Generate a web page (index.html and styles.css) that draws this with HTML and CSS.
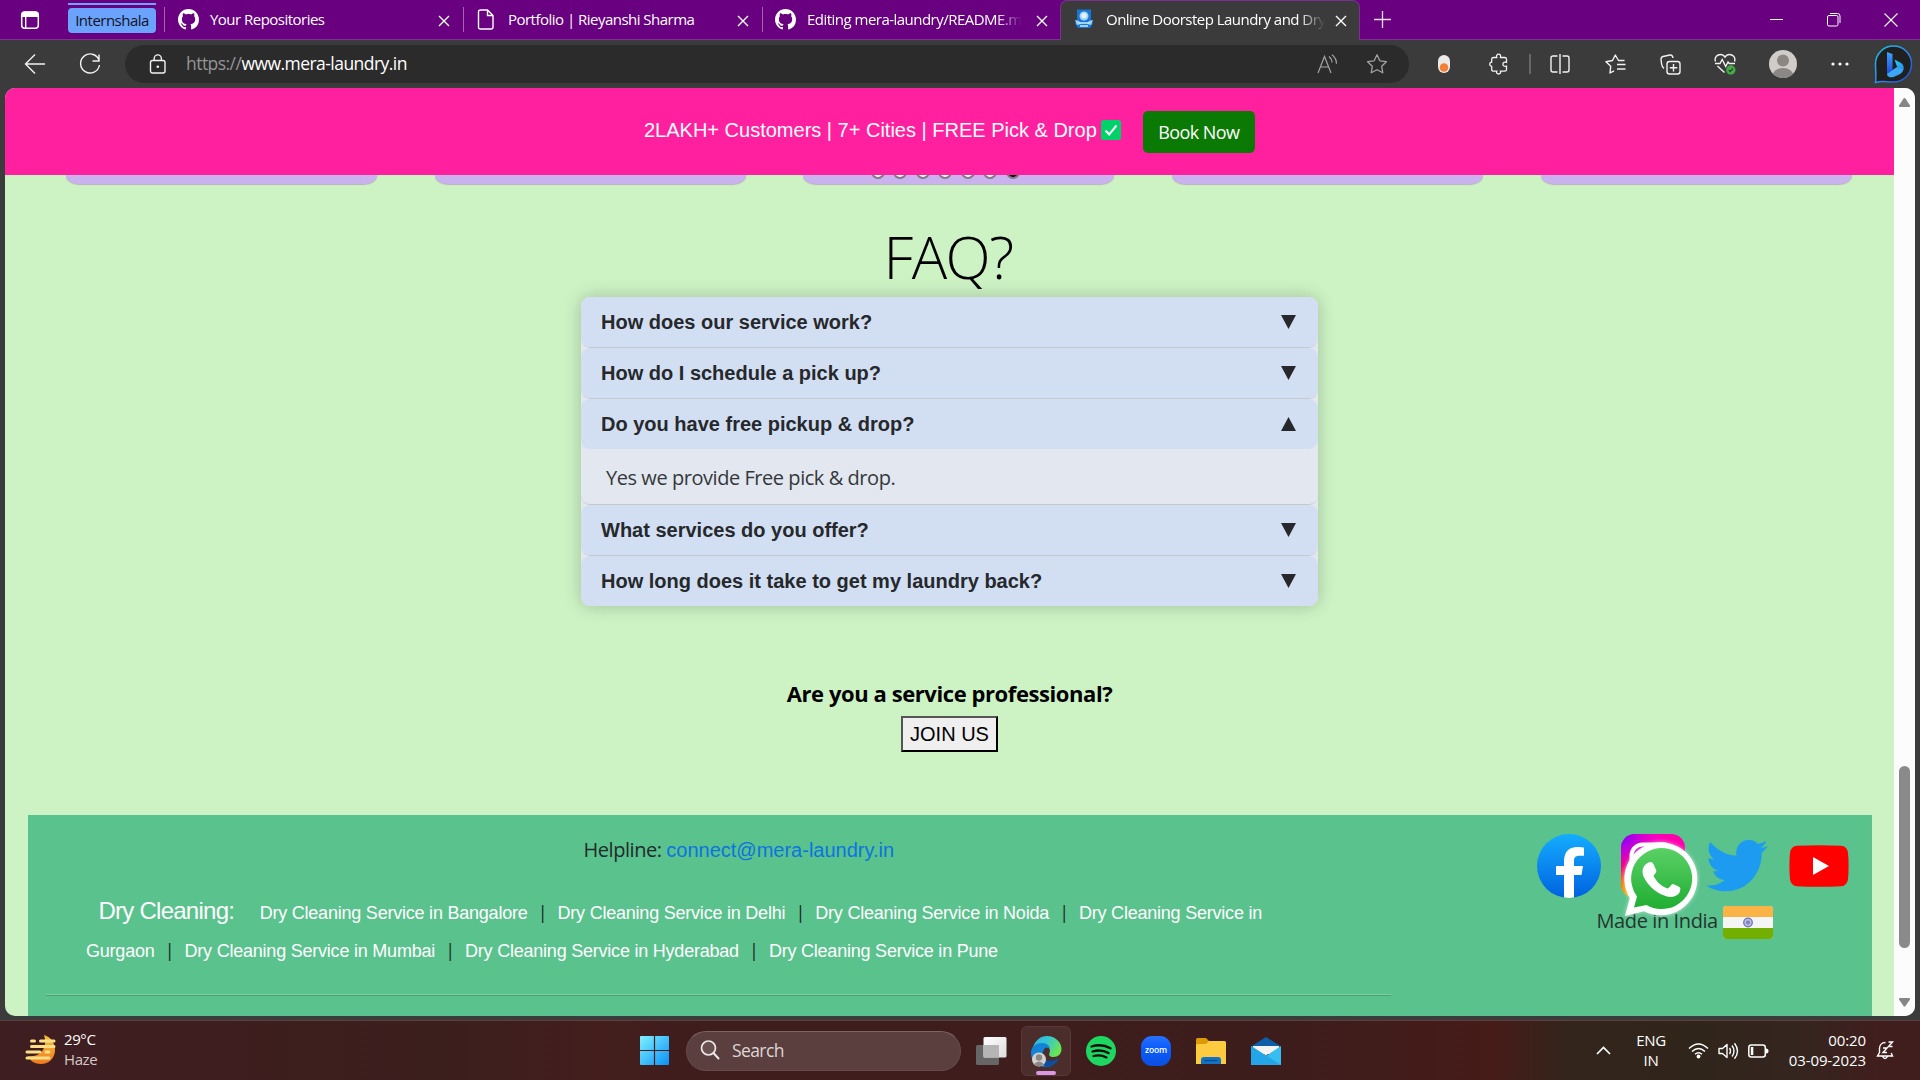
FILE: index.html
```html
<!DOCTYPE html>
<html lang="en">
<head>
<meta charset="utf-8">
<title>Online Doorstep Laundry and Dry Cleaning</title>
<link rel="stylesheet" href="styles.css">
</head>
<body>
<svg class="defs" width="0" height="0" aria-hidden="true">
  <defs>
    <symbol id="github" viewBox="0 0 16 16"><path fill="#fff" d="M8 0C3.58 0 0 3.58 0 8c0 3.54 2.29 6.53 5.47 7.59.4.07.55-.17.55-.38 0-.19-.01-.82-.01-1.49-2.01.37-2.53-.49-2.69-.94-.09-.23-.48-.94-.82-1.13-.28-.15-.68-.52-.01-.53.63-.01 1.08.58 1.23.82.72 1.21 1.87.87 2.33.66.07-.52.28-.87.51-1.07-1.78-.2-3.64-.89-3.64-3.95 0-.87.31-1.59.82-2.15-.08-.2-.36-1.02.08-2.12 0 0 .67-.21 2.2.82.64-.18 1.32-.27 2-.27s1.36.09 2 .27c1.53-1.04 2.2-.82 2.2-.82.44 1.1.16 1.92.08 2.12.51.56.82 1.27.82 2.15 0 3.07-1.87 3.75-3.65 3.95.29.25.54.73.54 1.48 0 1.07-.01 1.93-.01 2.2 0 .21.15.46.55.38A8.01 8.01 0 0 0 16 8c0-4.42-3.58-8-8-8z"/></symbol>
    <symbol id="close" viewBox="0 0 12 12"><path d="M1 1l10 10M11 1L1 11" stroke="#fff" stroke-width="1.4" fill="none"/></symbol>
    <symbol id="down" viewBox="0 0 15 14"><path d="M0 0h15L7.5 14z" fill="#26282b"/></symbol>
    <symbol id="up" viewBox="0 0 15 14"><path d="M0 14h15L7.5 0z" fill="#26282b"/></symbol>
  </defs>
</svg>

<header class="tabbar">
  <span class="workspace"><svg width="20" height="20" viewBox="0 0 20 20"><rect x="1.7" y="2" width="16.6" height="16.3" rx="3" fill="none" stroke="#fff" stroke-width="1.5"/><path d="M1.5 7V4.500q0-3 3-3h11q3 0 3 3V7z" fill="#fff"/><path d="M5.700 6v12" stroke="#fff" stroke-width="1.400"/></svg></span>
  <span class="group"><b>Internshala</b></span>
  <div class="tab tab-repos"><svg class="fav" width="21" height="21"><use href="#github"/></svg><span class="title">Your Repositories</span><svg class="x" width="12" height="12"><use href="#close"/></svg></div>
  <div class="tab tab-portfolio"><svg class="fav" width="18" height="21" viewBox="0 0 18 21"><path d="M3.500 1h7L16 6.500V18q0 2-2 2H3.500q-2 0-2-2V3q0-2 2-2zM10.500 1v5.500H16" fill="none" stroke="#fff" stroke-width="1.400"/></svg><span class="title">Portfolio | Rieyanshi Sharma</span><svg class="x" width="12" height="12"><use href="#close"/></svg></div>
  <div class="tab tab-edit"><svg class="fav" width="21" height="21"><use href="#github"/></svg><span class="title fade">Editing mera-laundry/README.m</span><svg class="x" width="12" height="12"><use href="#close"/></svg></div>
  <div class="tab tab-active"><svg class="fav" width="20" height="20" viewBox="0 0 20 20"><path d="M3 .5h14v11l2 3-3 4.500H4L1 14.500l2-3z" fill="#1677d8"/><circle cx="10" cy="7" r="4.500" fill="#a7d4fa"/><circle cx="10" cy="6.500" r="2.600" fill="#e6f4ff"/><path d="M1 11l4 1 2 3-4 1zM19 11l-4 1-2 3 4 1z" fill="#9ed2ff"/><path d="M5 14h10M6 17h8" stroke="#d4ebff" stroke-width="1.300"/></svg><span class="title fade">Online Doorstep Laundry and Dry</span><svg class="x" width="12" height="12"><use href="#close"/></svg></div>
  <svg class="newtab" width="19" height="19" viewBox="0 0 19 19"><path d="M9.500 1v17M1 9.500h17" stroke="#eadcf0" stroke-width="1.300"/></svg>
  <div class="winctl">
    <svg width="14" height="14" viewBox="0 0 14 14"><path d="M0 6.500h13" stroke="#fff"/></svg>
    <svg width="14" height="14" viewBox="0 0 14 14"><rect x=".5" y="2.500" width="10.500" height="10.500" rx="1.500" fill="none" stroke="#fff"/><path d="M3 .5h7.500q2.500 0 2.500 2.500V10" fill="none" stroke="#fff"/></svg>
    <svg width="14" height="14" viewBox="0 0 14 14"><path d="M.5 .5l13 13M13.500 .5l-13 13" stroke="#fff" stroke-width="1.100"/></svg>
  </div>
</header>

<nav class="toolbar">
  <svg class="back" width="22" height="22" viewBox="0 0 22 22"><path d="M21 11H1.500M11 1.500L1.500 11l9.500 9.500" fill="none" stroke="#f2f2f2" stroke-width="1.400"/></svg>
  <svg class="reload" width="22" height="22" viewBox="0 0 22 22"><path d="M20.300 8A9.500 9.500 0 1 0 20.500 12M20 1.500V8h-6.500" fill="none" stroke="#f2f2f2" stroke-width="1.400"/></svg>
  <div class="address">
    <svg class="lock" width="18" height="20" viewBox="0 0 18 20"><rect x="1.500" y="6.500" width="14.500" height="12.500" rx="2" fill="none" stroke="#f2f2f2" stroke-width="1.400"/><path d="M5.200 6.500V4.500a3.600 3.600 0 0 1 7.200 0v2" fill="none" stroke="#f2f2f2" stroke-width="1.400"/><circle cx="8.800" cy="12.700" r="1.300" fill="#f2f2f2"/></svg>
    <span class="url"><i>https://</i>www.mera-laundry.in</span>
    <svg class="read" width="21" height="20" viewBox="0 0 21 20"><path d="M1 19L7.500 2.500 14 19M3.300 13h8.400M12 2.500q3 2.500 3 6M15 .8q4.500 3.700 4.500 9" fill="none" stroke="#a3a3a3" stroke-width="1.200"/></svg>
    <svg class="star" width="22" height="22" viewBox="0 0 22 22"><path d="M11 1.800l2.900 6 6.500.9-4.700 4.600 1.100 6.500L11 16.700l-5.800 3.100 1.100-6.500L1.600 8.700l6.500-.9z" fill="none" stroke="#a3a3a3" stroke-width="1.300" stroke-linejoin="round"/></svg>
  </div>
  <span class="tool t1"><svg width="12" height="18" viewBox="0 0 12 18"><rect width="12" height="18" rx="6" fill="#eaeaea"/><circle cx="6" cy="12.500" r="4.300" fill="#f58033"/></svg></span>
  <span class="tool t2"><svg width="20" height="22" viewBox="0 0 20 22"><path d="M4.500 4.500h3.200c-.6-1.800.3-3.300 1.900-3.300s2.500 1.500 1.900 3.300h4.200q1.800 0 1.800 1.800v3c-2-.6-3.600.2-3.600 1.900s1.600 2.500 3.600 1.900v3.300q0 1.800-1.800 1.800h-4.200c.6 1.700-.3 2.800-1.900 2.800s-2.500-1.100-1.900-2.800H4.500q-1.800 0-1.800-1.800v-3c-1.200-.3-2-1-2-2.200s.8-2 2-2.200V6.300q0-1.800 1.800-1.800z" fill="none" stroke="#f2f2f2" stroke-width="1.300"/></svg></span>
  <span class="divider"></span>
  <span class="tool t3"><svg width="20" height="20" viewBox="0 0 20 20"><path d="M7.500 2H3Q1 2 1 4v12q0 2 2 2h4.500M12.500 2H17q2 0 2 2v12q0 2-2 2h-4.500M10 0v20" fill="none" stroke="#f2f2f2" stroke-width="1.400"/></svg></span>
  <span class="tool t4"><svg width="21" height="20" viewBox="0 0 21 20"><path d="M19.500 6.500h-6L10.300 1 7.500 6.500 1 7.800l4.700 4.500L5 19l4-2.200M12 10.500h8.500M12 15h8.500" fill="none" stroke="#f2f2f2" stroke-width="1.400" stroke-linejoin="round"/></svg></span>
  <span class="tool t5"><svg width="21" height="21" viewBox="0 0 21 21"><rect x="7" y="7.500" width="13" height="12.500" rx="2.500" fill="none" stroke="#f2f2f2" stroke-width="1.400"/><path d="M13.500 10v7.500M9.800 13.800h7.500M4 14.500Q2 13 1.600 10L1 5.500Q.8 3 3 2.500L10 1q2.500-.3 3 3" fill="none" stroke="#f2f2f2" stroke-width="1.400"/></svg></span>
  <span class="tool t6"><svg width="22" height="22" viewBox="0 0 22 22"><path d="M1.500 8.500C0 4 3.500 1.500 6.500 1.500c2 0 3.500 1 4.500 2.700 1-1.700 2.500-2.700 4.500-2.700 3 0 6.500 2.500 5 7M1 10.500h5L8.200 6.500l3.500 7 2.300-4.500 1.200 1.500H21M3.500 13l7 6.500" fill="none" stroke="#f2f2f2" stroke-width="1.400"/><circle cx="16.800" cy="17" r="4.700" fill="#45a948"/><path d="M14.800 17.200l1.400 1.300 2.600-2.800" fill="none" stroke="#2b2b2b" stroke-width="1.100"/></svg></span>
  <span class="tool t7"><svg width="28" height="28" viewBox="0 0 28 28"><clipPath id="av"><circle cx="14" cy="14" r="14"/></clipPath><g clip-path="url(#av)"><rect width="28" height="28" fill="#cfccc9"/><circle cx="14" cy="10.500" r="6" fill="#8b8784"/><ellipse cx="14" cy="26" rx="10.500" ry="8" fill="#8b8784"/></g></svg></span>
  <span class="tool t8"><svg width="18" height="4" viewBox="0 0 18 4"><circle cx="2" cy="2" r="1.600" fill="#fff"/><circle cx="9" cy="2" r="1.600" fill="#fff"/><circle cx="16" cy="2" r="1.600" fill="#fff"/></svg></span>
  <span class="tool t9"><svg width="39" height="39" viewBox="0 0 39 39"><defs><linearGradient id="bg1" x1="0" y1="0" x2="1" y2="1"><stop offset="0" stop-color="#19c9ee"/><stop offset=".55" stop-color="#2f83ee"/><stop offset="1" stop-color="#1548c8"/></linearGradient><linearGradient id="bg2" x1="0" y1="0" x2="0" y2="1"><stop offset="0" stop-color="#3ea4f7"/><stop offset="1" stop-color="#1d46e2"/></linearGradient><linearGradient id="bg3" x1="0" y1="0" x2="1" y2="1"><stop offset="0" stop-color="#1fd0f5"/><stop offset="1" stop-color="#2c8ef0"/></linearGradient></defs><path d="M1.500 37.500C2.500 31 1.500 25 1.500 19A18 18 0 1 1 19.500 37C12 37 8 35.500 1.500 37.500z" fill="#202020" stroke="url(#bg1)" stroke-width="1.500"/><path d="M13 7l5.500 2v16L13 30z" fill="url(#bg2)"/><path d="M13 29l5.500-4 5-3.200L29.600 24c-.6 3-3 4.800-5 5.800l-5 2.200c-3.500 1-6.200-.2-6.600-3z" fill="#3ba6f5"/><path d="M20.500 14.500L27 18q3.500 2.500 2.500 6.500L23 21.500z" fill="url(#bg3)"/></svg></span>
</nav>

<div class="frame">
  <div class="site">
    <div class="banner">
      <span class="promo">2LAKH+ Customers | 7+ Cities | FREE Pick &amp; Drop</span>
      <svg class="tick" width="20" height="20" viewBox="0 0 20 20"><rect width="20" height="20" rx="2.500" fill="#00d26a"/><path d="M4.500 10.500l3.700 4 7.300-9" fill="none" stroke="#fff" stroke-width="2"/></svg>
      <a class="book">Book Now</a>
    </div>
    <div class="cards">
      <div class="card"></div><div class="card"></div>
      <div class="card"><div class="dots"><i></i><i></i><i></i><i></i><i></i><i></i><i class="on"></i></div></div>
      <div class="card"></div><div class="card"></div>
    </div>
    <h1>FAQ?</h1>
    <div class="faq">
      <div class="item"><div class="q">How does our service work?<svg width="15" height="14"><use href="#down"/></svg></div></div>
      <div class="item"><div class="q">How do I schedule a pick up?<svg width="15" height="14"><use href="#down"/></svg></div></div>
      <div class="item"><div class="q">Do you have free pickup &amp; drop?<svg width="15" height="14"><use href="#up"/></svg></div><div class="a">Yes we provide Free pick &amp; drop.</div></div>
      <div class="item"><div class="q">What services do you offer?<svg width="15" height="14"><use href="#down"/></svg></div></div>
      <div class="item last"><div class="q">How long does it take to get my laundry back?<svg width="15" height="14"><use href="#down"/></svg></div></div>
    </div>
    <div class="pro"><b>Are you a service professional?</b><button>JOIN US</button></div>
    <footer>
      <div class="info">
        <p class="help">Helpline: <a>connect@mera-laundry.in</a></p>
        <p class="links"><span class="lead">Dry Cleaning:</span><a>Dry Cleaning Service in Bangalore</a><s>|</s><a>Dry Cleaning Service in Delhi</a><s>|</s><a>Dry Cleaning Service in Noida</a><s>|</s><a>Dry Cleaning Service in<br>Gurgaon</a><s>|</s><a>Dry Cleaning Service in Mumbai</a><s>|</s><a>Dry Cleaning Service in Hyderabad</a><s>|</s><a>Dry Cleaning Service in Pune</a></p>
        <hr>
      </div>
      <div class="social">
        <div class="logos">
          <svg width="64" height="64" viewBox="0 0 64 64"><defs><linearGradient id="fb" x1="0" y1="0" x2="0" y2="1"><stop offset="0" stop-color="#14adfe"/><stop offset="1" stop-color="#0062e0"/></linearGradient></defs><circle cx="32" cy="32" r="32" fill="url(#fb)"/><path d="M27 63.600V41h-8v-9h8v-4c0-10 4.500-15 13.500-15 3 0 5.500.3 6.500.6v8.200h-4.500c-4.500 0-5.500 2.200-5.500 5.500V32h9l-1.500 9H37v22.600q-5 .7-10 0z" fill="#fff"/></svg>
          <svg width="64" height="64" viewBox="0 0 64 64"><defs><radialGradient id="ig" cx=".1" cy="1.050" r="1.250"><stop offset="0" stop-color="#ffc800"/><stop offset=".22" stop-color="#ff7a00"/><stop offset=".45" stop-color="#ff0069"/><stop offset=".7" stop-color="#fa00c8"/><stop offset="1" stop-color="#f0a"/></radialGradient><radialGradient id="ig2" cx="0" cy="0" r=".7"><stop offset="0" stop-color="#6a00ff"/><stop offset="1" stop-color="#f0c" stop-opacity="0"/></radialGradient></defs><rect width="64" height="64" rx="14" fill="url(#ig)"/><rect width="64" height="64" rx="14" fill="url(#ig2)"/><rect x="10.500" y="10.500" width="43" height="43" rx="11" fill="none" stroke="#fff" stroke-width="4"/><circle cx="32" cy="32" r="15" fill="none" stroke="#fff" stroke-width="4"/></svg>
          <svg class="tw" width="62" height="53" viewBox="0 0 24 20" preserveAspectRatio="none"><path fill="#1d9bf0" d="M23.950 2.600c-.88.390-1.830.650-2.820.770 1.010-.6 1.790-1.560 2.160-2.700-.95.550-2 .96-3.120 1.180A4.920 4.920 0 0 0 11.800 6.300C7.700 6.100 4.100 4.100 1.670 1.150c-.43.720-.67 1.560-.67 2.450 0 1.700.88 3.210 2.200 4.090-.8-.03-1.570-.25-2.230-.61v.06c0 2.380 1.700 4.370 3.950 4.820-.74.2-1.500.230-2.220.080.630 1.950 2.440 3.370 4.600 3.410A9.870 9.870 0 0 1 0 17.500 13.950 13.950 0 0 0 7.550 19.700c9.050 0 14-7.500 14-13.980 0-.21 0-.42-.02-.63.960-.69 1.800-1.560 2.420-2.490z"/></svg>
          <svg class="yt" width="60" height="42" viewBox="0 0 60 42"><path d="M8 .8Q30-.5 52 .8q6 .4 7 7 1.200 13 0 26.400-1 6.600-7 7-22 1.300-44 0-6-.4-7-7-1.200-13.400 0-26.400Q2 1.200 8 .8z" fill="#f00"/><path d="M24 12l16 9-16 9z" fill="#fff"/></svg>
        </div>
        <div class="made">Made in India <svg width="50" height="33" viewBox="0 0 50 33"><clipPath id="fl"><rect width="50" height="33" rx="3.500"/></clipPath><g clip-path="url(#fl)"><rect width="50" height="33" fill="#f5f5f5"/><rect width="50" height="11" fill="#fab446"/><rect y="22" width="50" height="11" fill="#73af00"/></g><circle cx="25" cy="16.500" r="4.300" fill="#b8bbdc" stroke="#6a70b4" stroke-width="1.200"/><circle cx="25" cy="16.500" r="2" fill="#7c82c0"/></svg></div>
        <svg class="whatsapp" width="80" height="80" viewBox="0 0 80 80"><defs><linearGradient id="wa" x1="0" y1="0" x2="0" y2="1"><stop offset="0" stop-color="#5bd066"/><stop offset="1" stop-color="#1fae32"/></linearGradient></defs><path d="M4 77l4.800-18A36.500 36.500 0 1 1 23 72.200z" fill="#fff"/><path d="M13 68.500l3-11A30.500 30.500 0 1 1 25.500 66z" fill="url(#wa)"/><path d="M27.500 23.500c2-.4 4-.5 5 1.500l2.800 6.500c.5 1.500-2.300 4.500-2.800 5.500 3.500 6.500 8 10 14 12.500 1.500 0 3.500-4 5-4.500 2 .2 6 2.500 7.500 3.500.8.700.3 4.500-1.500 6.500-4 3.500-8.500 3.500-13 2-11-3.500-18.500-12-22-19.500-2-6-1-11 5-14z" fill="#fff"/></svg>
      </div>
    </footer>
  </div>
  <div class="scroll">
    <svg width="13" height="11" viewBox="0 0 13 11"><path d="M2 10Q.500 10 1 8.500L5.500 1.500q1-1 2 0L12 8.500q.500 1.500-1 1.500z" fill="#868686"/></svg>
    <span class="thumb"></span>
    <svg width="13" height="11" viewBox="0 0 13 11"><path d="M2 1Q.500 1 1 2.500L5.500 9q1 1 2 0L12 2.500q.500-1.500-1-1.500z" fill="#868686"/></svg>
  </div>
</div>

<div class="taskbar">
  <div class="weather"><svg width="31" height="34" viewBox="0 0 31 34"><defs><linearGradient id="mo" x1="0" y1="0" x2="0" y2="1"><stop offset="0" stop-color="#f7c33f"/><stop offset="1" stop-color="#ee7a1e"/></linearGradient></defs><path d="M19 1c7 2 11 8 11 15 0 8-6 14-14 14-6 0-11-3-13-8 13 2 20-9 16-21z" fill="url(#mo)"/><path d="M6.500 7h3M15.500 7H29M6.500 12.500H29M2 18h13M21 18h3M2 24h22" stroke="#ffdf85" stroke-width="3" stroke-linecap="round"/></svg><span>29°C<br><em>Haze</em></span></div>
  <div class="apps">
    <svg class="start" width="29" height="29" viewBox="0 0 29 29"><defs><linearGradient id="wn" x1="0" y1="0" x2="1" y2="1"><stop offset="0" stop-color="#80f1ff"/><stop offset="1" stop-color="#0a90f5"/></linearGradient></defs><path d="M1 0h12.900v13.900H0V1q0-1 1-1zM15.100 0H28q1 0 1 1v12.900H15.100zM0 15.100h13.900V29H1q-1 0-1-1zM15.100 15.100H29V28q0 1-1 1H15.100z" fill="url(#wn)"/></svg>
    <div class="search"><svg width="20" height="20" viewBox="0 0 20 20"><circle cx="8.500" cy="8" r="7" fill="#ffffff18" stroke="#f0e8e8" stroke-width="1.700"/><path d="M13.500 13l5 5.500" stroke="#f0e8e8" stroke-width="2" stroke-linecap="round"/></svg>Search</div>
    <svg class="view" width="31" height="28" viewBox="0 0 31 28"><defs><linearGradient id="tv" x1="0" y1="0" x2="1" y2="1"><stop offset="0" stop-color="#fff"/><stop offset="1" stop-color="#dcdcdc"/></linearGradient></defs><rect y="8" width="23" height="20" rx="1.500" fill="#666"/><rect x="7.500" width="23" height="20.500" rx="1.500" fill="url(#tv)"/><path d="M7.500 8H23v12.500H7.500z" fill="#b5b5b5"/></svg>
    <span class="edge"><svg width="31" height="31" viewBox="0 0 31 31"><defs><linearGradient id="e1" x1="0" y1="0" x2="1" y2=".5"><stop offset="0" stop-color="#2fb1f2"/><stop offset=".5" stop-color="#35c6cf"/><stop offset="1" stop-color="#6be454"/></linearGradient></defs><path d="M1 15C3 4 10 0 16 0c8 0 14.500 6 14.500 13 0 5-3.500 8-8 8-4 0-5-2-4-4 1.500-4-1-6-4-6-5 0-10 1-13.500 4z" fill="url(#e1)"/><path d="M0 17C0 10 6 7 11 7c5 0 8 3 8 6-3-3-7-1-7 4 0 8 7 12 14 8-3 4-7 6-11 6C7 31 0 26 0 17z" fill="#1284d8"/><path d="M12 16c-1 8 6 12 16 6-2 6-8 9-13 9-5-3-7-10-3-15z" fill="#0d4f9e"/><circle cx="8" cy="23.500" r="7" fill="#d3d1cf"/><circle cx="8" cy="21.500" r="3.200" fill="#8b8784"/><path d="M3 28.300q5-5.500 10 0-5 4-10 0z" fill="#8b8784"/></svg></span>
    <svg class="spotify" width="30" height="30" viewBox="0 0 30 30"><circle cx="15" cy="15" r="15" fill="#1ed760"/><path d="M5.500 10.500c6.500-2 13.500-1.300 19 1.800M6.500 15.500c5.500-1.600 11.500-1 16 1.600M7.500 20c4.500-1.200 9-.8 13 1.400" fill="none" stroke="#0b0b0b" stroke-width="2.300" stroke-linecap="round"/></svg>
    <span class="zoomapp">zoom</span>
    <svg class="folder" width="30" height="28" viewBox="0 0 30 28"><path d="M0 2.500Q0 1 1.500 1H10l3 3v6H0z" fill="#dc9a06"/><path d="M1.500 7H10l3-3h15.500Q30 4 30 5.500V27H0V8.500Q0 7 1.500 7z" fill="#fccb3f"/><path d="M5 27v-4q0-3 3-3h14q3 0 3 3v4z" fill="#1272c4"/><path d="M8.500 23.500h13" stroke="#084a8a" stroke-width="1.200"/></svg>
    <svg class="mail" width="30" height="28" viewBox="0 0 30 28"><path d="M0 9.500L15 0l15 9.500v4H0z" fill="#0c5ea8"/><path d="M2 9h26v8H2z" fill="#efefef"/><path d="M0 9l15 10L30 9v19H0z" fill="#36bdf2"/><path d="M0 9l30 19H0z" fill="#23a5e8"/><path d="M2.500 9h25L15 18.500z" fill="#f3f3f3"/></svg>
  </div>
  <div class="tray">
    <svg class="chev" width="15" height="9" viewBox="0 0 15 9"><path d="M1 8l6.500-6.500L14 8" fill="none" stroke="#fff" stroke-width="1.700"/></svg>
    <span class="lang">ENG<br>IN</span>
    <svg class="wifi" width="21" height="17" viewBox="0 0 21 17"><path d="M1 6.500q9.500-9 19 0M4 9.500q6.500-6 13 0M7 12.300q3.500-3 7 0" fill="none" stroke="#fff" stroke-width="1.500"/><circle cx="10.500" cy="14.500" r="1.900" fill="#fff"/></svg>
    <svg class="vol" width="21" height="18" viewBox="0 0 21 18"><path d="M1 6.500h3.500L9 2.500v13L4.500 11.500H1z" fill="none" stroke="#fff" stroke-width="1.400" stroke-linejoin="round"/><path d="M11.500 6q2 3 0 6M14 3.500q4 5.500 0 11M16.500 1.200q6 7.800 0 15.600" fill="none" stroke="#fff" stroke-width="1.400"/></svg>
    <svg class="bat" width="21" height="14" viewBox="0 0 21 14"><rect x=".8" y="1" width="16.500" height="12" rx="2.500" fill="none" stroke="#fff" stroke-width="1.500"/><rect x="2.800" y="3" width="2.500" height="8" fill="#fff"/><path d="M18 4.500q2.500 0 2.500 2.500T18 9.500z" fill="#fff"/></svg>
    <span class="clock">00:20<br>03-09-2023</span>
    <svg class="bell" width="19" height="19" viewBox="0 0 19 19"><path d="M9.500 1.500C5.500 1.500 3.500 4.500 3.500 7.500v4L1.500 15h15l-1.300-3M6.500 15.500q2.500 4 5 0" fill="none" stroke="#fff" stroke-width="1.400"/><path d="M7 7h4l-4 4.500h4M12.500 1h4l-4 4.500h4" fill="none" stroke="#fff" stroke-width="1.400"/></svg>
  </div>
</div>
</body>
</html>
```
FILE: styles.css
```css
* { box-sizing: border-box; }
html, body { margin: 0; }
body {
  width: 1920px; height: 1080px; overflow: hidden;
  display: flex; flex-direction: column;
  background: #3b3b3b;
  font-family: "Open Sans", "Noto Sans", sans-serif;
}
svg { display: block; flex: none; }
.defs { position: absolute; }

/* tab strip */
.tabbar {
  height: 40px; flex: none; display: flex; align-items: stretch;
  background: #68007f; border-bottom: 1px solid #7d2f92;
  color: #fff; font-size: 15px; letter-spacing: -.52px;
}
.workspace { width: 68px; padding: 10px 0 0 20px; }
.group { width: 88px; border-top: 2px solid #6aa2fc; margin: 3px 8px 0 0; padding-top: 3px; }
.group b {
  display: block; height: 25px; border-radius: 4px; background: #6aa2fc; color: #12121c;
  font-weight: 400; line-height: 24px; text-align: center;
}
.tab { display: flex; align-items: center; padding-bottom: 1px; height: 39px; }
.tab:not(.tab-active)::before { content: ""; width: 1px; height: 25px; background: #a365b2; }
.title { white-space: nowrap; line-height: 24px; padding-bottom: 1px; }
.fade { -webkit-mask-image: linear-gradient(90deg, #000 calc(100% - 26px), transparent); mask-image: linear-gradient(90deg, #000 calc(100% - 26px), transparent); }
.x { margin: 3px 0 0 auto; }
.tab-repos { width: 299px; padding-right: 13px; }
.tab-repos .fav { margin: 0 11px 0 13px; }
.tab-portfolio { width: 299px; padding-right: 13px; }
.tab-portfolio .fav { margin: 0 13px 0 13px; }
.tab-edit { width: 299px; padding-right: 13px; }
.tab-edit .fav { margin: 0 11px 0 12px; }
.tab-active { width: 300px; height: 40px; margin-left: -1px; background: #3b3b3b; border: 1px solid #7d2f92; border-width: 1px 1px 0; border-radius: 7px 7px 0 0; padding: 0 12px 3px 13px; }
.tab-active .fav { margin: 0 12px 0 0; }
.newtab { margin: 10px 0 0 13px; }
.winctl { margin-left: auto; padding: 13px 22px 0 0; display: flex; gap: 43px; }

/* address row */
.toolbar { height: 48px; flex: none; display: flex; align-items: center; padding-bottom: 1px; }
.back { margin-left: 24px; }
.reload { margin-left: 33px; }
.address {
  width: 1284px; height: 38px; border-radius: 19px; background: #2b2b2b;
  margin: 1px 8px 0 24px; padding: 0 21px 0 24px; display: flex; align-items: center;
}
.url { margin: -2px auto 0 19px; color: #fff; font-size: 17.5px; letter-spacing: -.54px; }
.url i { font-style: normal; color: #949494; }
.star { margin-left: 28px; }
.tool { display: flex; justify-content: center; flex: none; padding-top: 1px; }
.t1 { width: 54px; } .t2 { width: 56px; } .t3 { width: 53px; } .t4 { width: 58px; }
.t5 { width: 52px; } .t6 { width: 58px; } .t7 { width: 58px; } .t8 { width: 56px; } .t9 { width: 50px; }
.divider { width: 2px; height: 20px; margin: 1px 2px 0; background: #666; }

/* page viewport */
.frame {
  height: 928px; flex: none; margin: 0 5px 4px; display: flex; overflow: hidden;
  border-radius: 10px; background: #cdf3c5;
}
.site { width: 1889px; display: flex; flex-direction: column; align-items: center; }
.scroll {
  width: 21px; background: #fcfcfc; display: flex; flex-direction: column; align-items: center;
  padding: 9px 0 8px; justify-content: space-between;
}
.thumb { width: 11px; height: 182px; border-radius: 6px; background: #8a8a8a; margin-top: 609px; }

.banner {
  width: 100%; height: 87px; flex: none; background: #ff209f; display: flex; align-items: center; z-index: 1;
  padding-left: 639px; color: #fff; font: 20px "Liberation Sans", sans-serif;
}
.promo { padding-bottom: 2px; }
.tick { margin: 0 0 4px 4px; }
.book {
  width: 112px; height: 42px; margin: 1px 0 0 22px; border-radius: 5px; background: #0b7a04;
  font: 18px/42px "Open Sans", sans-serif; letter-spacing: -.6px; text-align: center;
}
.cards { display: flex; width: 100%; height: 9px; flex: none; padding-left: 61px; gap: 57.700px; }
.card { width: 311px; background: #c9b2ed; border-radius: 0 0 13px 13px / 0 0 9px 9px; box-shadow: 0 1px 1px #b9b4bc; }
.dots { display: flex; justify-content: center; gap: 8.500px; margin: -10px 0 0 -27px; }
.dots i { width: 14px; height: 14px; border: 2px solid #807a86; border-radius: 50%; background: #fff; }
.dots .on { background: #000; }

h1 { margin: 31px 3px 0 0; height: 82px; flex: none; font-weight: 300; font-size: 59px; line-height: 82px; letter-spacing: -1.500px; color: #000; }
.faq {
  width: 737px; flex: none; background: #e2e7f0; border-radius: 9px;
  box-shadow: 0 0 18px rgba(0, 0, 0, .22);
}
.item { border-bottom: 1px solid #c6c9cc; border-radius: 9px; }
.item.last { border: 0; }
.q {
  height: 50px; border-radius: 9px; background: #d2dff3; padding: 0 22px 0 20px;
  display: flex; align-items: center; justify-content: space-between;
  font: bold 20px "Liberation Sans", sans-serif; color: #26282b;
}
.a { height: 55px; padding: 15px 24px 0 25px; font-size: 20px; line-height: 28px; letter-spacing: -.45px; color: #35383b; }

.pro { display: flex; flex-direction: column; align-items: center; margin-top: 72px; flex: none; }
.pro b { font-size: 22px; line-height: 30px; height: 38px; letter-spacing: -.42px; color: #000; }
.pro button {
  width: 97px; height: 36px; padding: 0; border: 2px solid #000; border-color: #555 #000 #000 #555; background: #efefef;
  font: 20px/30px "Liberation Sans", sans-serif; color: #000;
}

footer { width: 1844px; height: 220px; flex: none; margin-top: 63px; background: #5ac28d; display: flex; }
.info { width: 1363px; padding-left: 18px; color: #212c2a; }
p { margin: 0; }
.help { padding: 20px 0 0 538px; font-size: 20px; line-height: 30px; letter-spacing: -.45px; }
.help a { font: 20px "Liberation Sans", sans-serif; letter-spacing: 0; color: #0b74e0; }
.links { margin: 27px 0 0 40.500px; font: 18px/38px "Liberation Sans", sans-serif; letter-spacing: -.22px; color: #fff; white-space: nowrap; }
.lead { font-size: 24px; line-height: 38px; letter-spacing: -.75px; margin: 0 25.500px 0 12.500px; }
.links s { text-decoration: none; display: inline-block; width: 30px; line-height: 24px; text-align: center; font-family: "Open Sans", sans-serif; color: #1c2624; }
hr { margin: 24px 0 0; border: 0; border-top: 1px solid #7bcea4; height: 2px; background: #4c9f76; }
.social { flex: 1; position: relative; }
.logos { display: flex; padding: 19px 0 0 146px; height: 83px; }
.logos svg + svg { margin-left: 20px; }
.logos .tw { margin-top: 5px; margin-left: 21px; }
.logos .yt { margin-top: 11px; margin-left: 21px; }
.made { display: flex; align-items: center; gap: 5px; padding: 5px 0 0 206px; font-size: 20px; line-height: 36px; letter-spacing: -.4px; color: #25352f; }
.made svg { margin-top: 3px; }
.whatsapp { position: absolute; left: 230px; top: 24px; filter: drop-shadow(0 0 2px rgba(255, 255, 255, .6)); }

/* desktop taskbar */
.taskbar {
  height: 60px; flex: none; display: flex; border-top: 1px solid #5b4240;
  background: linear-gradient(90deg, #3e1e21 0, #3e1e1e 200px, #3b1f1d 440px, #431e1d 600px, #3f1d1d 700px, #3d1d1c 1300px, #461b18 1490px, #33251c 1570px, #30251b 1700px, #35251f 1800px, #401e1d 1880px);
  color: #fff; font-size: 15px;
}
.weather { width: 640px; display: flex; padding: 13px 0 0 25px; line-height: 20px; letter-spacing: -.4px; }
.weather span { margin: -5px 0 0 8px; }
.weather em { font-style: normal; color: #d5c9c8; }
.apps { display: flex; align-items: center; }
.search {
  width: 275px; height: 40px; margin-left: 17px; padding: 0 0 1px 13px; border-radius: 20px;
  background: #5a3f3e; border: 1px solid #664b4a; border-top-color: #7d6463;
  display: flex; align-items: center; gap: 12px; font-size: 17.500px; letter-spacing: -.6px; color: #dfd6d5;
}
.view { margin-left: 15px; }
.edge { width: 50px; height: 50px; margin-left: 14px; border-radius: 6px; background: #4b2d2c; border: 1px solid #563938; padding: 9px 0 0 9px; position: relative; }
.edge::after { content: ""; position: absolute; left: 14px; bottom: 0; width: 20px; height: 4px; border-radius: 2px; background: #d998df; }
.spotify { margin-left: 15px; }
.zoomapp {
  width: 30px; height: 30px; margin-left: 25px; border-radius: 11px; background: linear-gradient(#2a70ff, #0b5cff 40%, #0a4fe0);
  font-size: 8.500px; font-weight: 600; line-height: 28px; text-align: center; letter-spacing: -.1px;
}
.folder { margin-left: 25px; }
.mail { margin-left: 25px; }
.tray { margin-left: auto; display: flex; align-items: center; padding-right: 25px; line-height: 20px; }
.lang { width: 60px; margin: -1px 0 0 10px; text-align: center; letter-spacing: -.3px; }
.wifi { margin-left: 7px; }
.vol { margin-left: 9px; }
.bat { margin-left: 9px; }
.clock { width: 97px; text-align: right; margin: -1px 0 0; letter-spacing: -.1px; }
.bell { margin-left: 10px; }
```
